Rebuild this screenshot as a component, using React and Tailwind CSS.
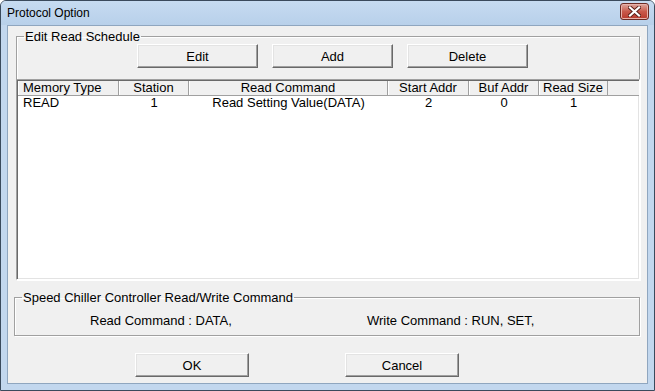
import React from 'react';

const COLUMNS = [
  { label: 'Memory Type', w: 'w-[101px]', align: 'text-left pl-[5px]' },
  { label: 'Station', w: 'w-[70px]', align: 'text-center' },
  { label: 'Read Command', w: 'w-[199px]', align: 'text-center' },
  { label: 'Start Addr', w: 'w-[81px]', align: 'text-center' },
  { label: 'Buf Addr', w: 'w-[70px]', align: 'text-center' },
  { label: 'Read Size', w: 'w-[69px]', align: 'text-center' },
];

const ROWS = [['READ', '1', 'Read Setting Value(DATA)', '2', '0', '1']];

function WinButton({ children, className = '' }) {
  return (
    <button
      className={`h-[24px] bg-[#f0f0f0] border border-t-white border-l-white border-r-[#696969] border-b-[#696969] shadow-[inset_-1px_-1px_0_#a0a0a0,inset_1px_1px_0_#e3e3e3] text-[13px] text-black leading-none ${className}`}
    >
      {children}
    </button>
  );
}

function GroupBox({ title, className = '', children }) {
  return (
    <fieldset className={`border border-[#a0a0a0] shadow-[inset_1px_1px_0_white,1px_1px_0_white] ${className}`}>
      <legend className="ml-[7px] px-[1px] text-[13px] leading-[13px] text-black">{title}</legend>
      {children}
    </fieldset>
  );
}

export default function App() {
  return (
    <div className="w-[655px] h-[391px] flex flex-col bg-[#c2d7ee] border border-[#3a4a5c] rounded-t-[6px] font-['Liberation_Sans',Arial,sans-serif] overflow-hidden">
      {/* title bar */}
      <div className="h-[24px] shrink-0 flex items-center justify-between pl-[6px] pr-[5px] bg-gradient-to-b from-[#c6dbf1] to-[#b8d0ea]">
        <span className="text-[12px] text-black">Protocol Option</span>
        <div className="mt-[-4px] w-[29px] h-[17px] rounded-[3px] border border-[#6b2b24] bg-gradient-to-b from-[#dba79f] via-[#c9594b] to-[#b8382b] flex items-center justify-center shadow-[inset_0_0_0_1px_#e8b2aa]">
          <svg width="13" height="11" viewBox="0 0 13 11">
            <path d="M2 1.5 L11 9.5 M11 1.5 L2 9.5" stroke="#5a2019" strokeWidth="4" strokeLinecap="square" />
            <path d="M2 1.5 L11 9.5 M11 1.5 L2 9.5" stroke="#ffffff" strokeWidth="2.2" strokeLinecap="square" />
          </svg>
        </div>
      </div>

      {/* client area */}
      <div className="flex-1 mx-[6px] mb-[6px] bg-[#f0f0f0] border border-[#8fa6bf] flex flex-col text-black">
        <GroupBox title="Edit Read Schedule" className="mt-[4px] ml-[8px] mr-[7px] h-[250px] flex flex-col">
          <div className="flex gap-[14px] ml-[120px] mt-[1px]">
            <WinButton className="w-[121px]">Edit</WinButton>
            <WinButton className="w-[121px]">Add</WinButton>
            <WinButton className="w-[121px]">Delete</WinButton>
          </div>

          {/* list view */}
          <div className="mt-[11px] -mx-px h-[201px] bg-white border border-t-[#a0a0a0] border-l-[#a0a0a0] border-r-white border-b-white shadow-[inset_1px_1px_0_#696969,inset_-1px_-1px_0_#e3e3e3]">
            <div className="ml-[1px] mt-[1px] flex h-[15px] text-[13px] leading-[14px] bg-[#f0f0f0] border-b border-[#a0a0a0]">
              {COLUMNS.map(c => (
                <div key={c.label} className={`${c.w} ${c.align} border-r border-[#a0a0a0] shadow-[inset_1px_0_0_white] shrink-0`}>
                  {c.label}
                </div>
              ))}
              <div className="flex-1" />
            </div>
            {ROWS.map((r, i) => (
              <div key={i} className="ml-[1px] flex h-[13px] text-[13px] leading-[13px]">
                {r.map((v, j) => (
                  <div key={j} className={`${COLUMNS[j].w} ${COLUMNS[j].align} shrink-0`}>{v}</div>
                ))}
              </div>
            ))}
          </div>
        </GroupBox>

        <GroupBox title="Speed Chiller Controller Read/Write Command" className="mt-[11px] ml-[6px] mr-[7px] h-[45px]">
          <div className="flex text-[13px] leading-[13px] mt-[10px]">
            <span className="ml-[75px] w-[277px]">Read Command : DATA,</span>
            <span>Write Command : RUN, SET,</span>
          </div>
        </GroupBox>

        <div className="flex mt-[17px] ml-[127px] gap-[96px]">
          <WinButton className="w-[114px]">OK</WinButton>
          <WinButton className="w-[114px]">Cancel</WinButton>
        </div>
      </div>
    </div>
  );
}
